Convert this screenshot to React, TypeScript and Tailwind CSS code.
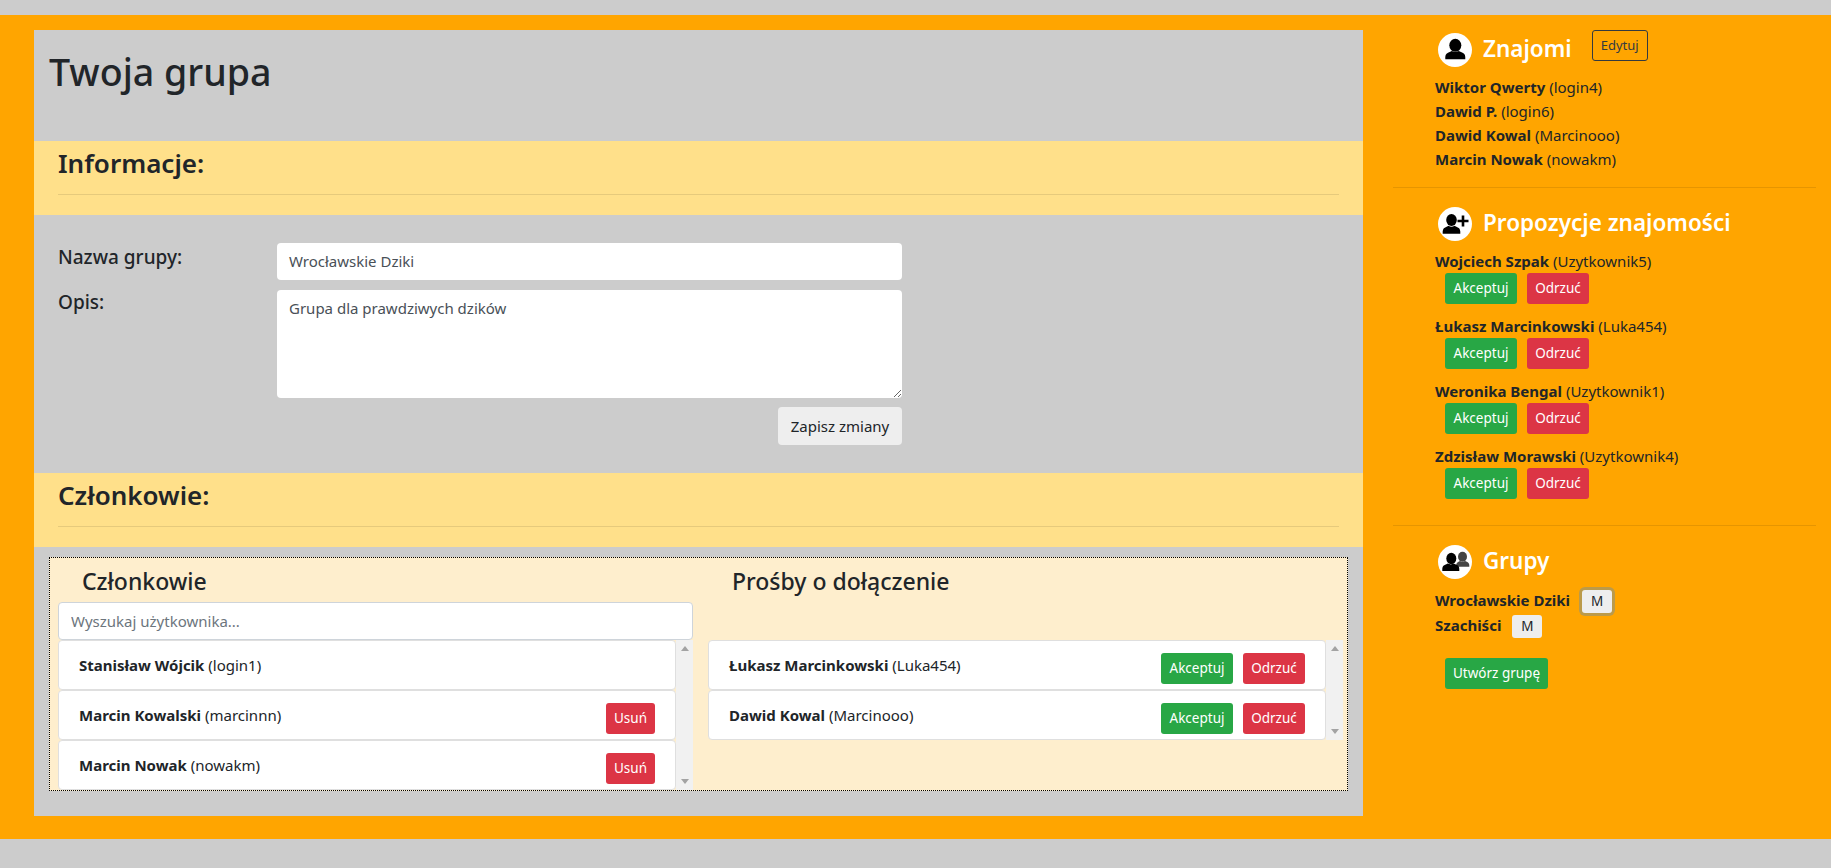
import React from 'react';

const font = "font-['Noto_Sans','Open_Sans',sans-serif]";

const PersonIcon = () => (
  <svg viewBox="0 0 34 34" className="w-[34px] h-[34px] shrink-0">
    <circle cx="17" cy="17" r="17" fill="#fff" />
    <ellipse cx="17.300" cy="12.300" rx="6" ry="6.500" fill="#000" />
    <path d="M7.300 26.300c-.2-3.500.3-5.600 2.700-6.600l3.800-1.700c2.100 1.300 4.900 1.300 7 0l3.800 1.700c2.400 1 2.900 3.100 2.700 6.600z" fill="#000" />
  </svg>
);

const PersonPlusIcon = () => (
  <svg viewBox="0 0 34 34" className="w-[34px] h-[34px] shrink-0">
    <circle cx="17" cy="17" r="17" fill="#fff" />
    <ellipse cx="13.500" cy="13" rx="5.300" ry="6" fill="#000" />
    <path d="M4.700 26.700c-.2-3.500.3-5.400 2.500-6.300l3.300-1.600c1.900 1.200 4.100 1.200 6 0l3.300 1.600c2.200.9 2.700 2.800 2.500 6.300z" fill="#000" />
    <path d="M23.700 8.500h2.600v4.200h4.200v2.600h-4.200v4.200h-2.600v-4.200h-4.200v-2.600h4.200z" fill="#000" />
  </svg>
);

const PeopleIcon = () => (
  <svg viewBox="0 0 34 34" className="w-[34px] h-[34px] shrink-0">
    <circle cx="17" cy="17" r="17" fill="#fff" />
    <ellipse cx="24.500" cy="11.800" rx="4.500" ry="5" fill="#444" />
    <path d="M18 21.700c0-3 .8-4.200 2.500-5l1.500-.7c1.600 1 3.400 1 5 0l1.800.8c1.900.8 2.700 2 2.500 4.900z" fill="#444" />
    <ellipse cx="13.300" cy="13.500" rx="5" ry="5.700" fill="#000" />
    <path d="M4.300 26c-.2-3.300.3-5 2.400-5.900l3.200-1.500c1.800 1.100 4 1.100 5.800 0l3.200 1.500c2.100.9 2.600 2.600 2.400 5.900z" fill="#000" />
  </svg>
);

const Btn = ({ label, color }: { label: string; color: 'green' | 'red' }) => (
  <button
    className={`h-[31px] px-2 rounded-[3px] text-[13.5px] text-white leading-none ${
      color === 'green' ? 'w-[72px] bg-[#28a745]' : 'min-w-[49px] bg-[#dc3545]'
    }`}
  >
    {label}
  </button>
);

const RejectBtn = () => (
  <button className="w-[62px] h-[31px] rounded-[3px] text-[13.5px] text-white leading-none bg-[#dc3545]">Odrzuć</button>
);

const Person = ({ name, login }: { name: string; login: string }) => (
  <div className="text-[15px] leading-6 text-[#212529] whitespace-nowrap">
    <b className="font-bold">{name}</b> ({login})
  </div>
);

const Scrollbar = () => (
  <div className="w-[17px] shrink-0 bg-[#f1f1f1] flex flex-col justify-between items-center py-[6px]">
    <div className="w-0 h-0 border-x-[4px] border-x-transparent border-b-[5px] border-b-[#a3a3a3]" />
    <div className="w-0 h-0 border-x-[4px] border-x-transparent border-t-[5px] border-t-[#a3a3a3]" />
  </div>
);

const ListItem = ({ name, login, children }: { name: string; login: string; children?: React.ReactNode }) => (
  <div className="h-[50px] shrink-0 bg-white border border-[#dfdfdf] rounded-[4px] px-[20px] flex justify-between">
    <div className="pt-[12px] text-[15px] leading-6 text-[#212529] whitespace-nowrap">
      <b className="font-bold">{name}</b> ({login})
    </div>
    <div className="pt-[12px] flex gap-[10px]">{children}</div>
  </div>
);

const suggestions = [
  ['Wojciech Szpak', 'Uzytkownik5'],
  ['Łukasz Marcinkowski', 'Luka454'],
  ['Weronika Bengal', 'Uzytkownik1'],
  ['Zdzisław Morawski', 'Uzytkownik4'],
];

const SectionBand = ({ title }: { title: string }) => (
  <div className="h-[74px] bg-[#ffe08a] px-[24px] pt-[4px]">
    <h3 className="text-[26px] leading-[34px] font-semibold text-[#212529] relative top-[1px]">{title}</h3>
    <div className="mt-[15px] border-t border-[#e6ca7c]" />
  </div>
);

export default function App() {
  return (
    <div className={`${font} min-h-[868px] bg-[#cccccc] pt-[15px]`}>
      <div className="h-[824px] bg-[#ffa500] flex">
        {/* Main panel */}
        <div className="w-[1329px] ml-[34px] mt-[15px] h-[786px] bg-[#cccccc] shrink-0">
          <div className="h-[111px] px-[15px] pt-[18px]">
            <h1 className="text-[37.600px] leading-[48px] font-medium text-[#212529]">Twoja grupa</h1>
          </div>

          <SectionBand title="Informacje:" />

          {/* Form */}
          <div className="h-[258px] pl-[24px] pt-[28px] w-[868px]">
            <div className="flex">
              <label className="w-[219px] text-[19px] leading-7 font-medium text-[#212529]">Nazwa grupy:</label>
              <div className="w-[625px] h-[37px] bg-white rounded-[4px] px-3 text-[15px] leading-[37px] text-[#495057]">
                Wrocławskie Dziki
              </div>
            </div>
            <div className="flex mt-[10px]">
              <label className="w-[219px] -mt-[2px] text-[19px] leading-7 font-medium text-[#212529]">Opis:</label>
              <textarea
                className="w-[625px] h-[108px] bg-white rounded-[4px] px-3 py-[6px] text-[15px] leading-6 text-[#495057]"
                defaultValue="Grupa dla prawdziwych dzików"
              />
            </div>
            <div className="flex justify-end mt-[9px]">
              <button className="w-[124px] h-[38px] bg-[#eeeeee] rounded-[4px] text-[15px] text-[#212529]">
                Zapisz zmiany
              </button>
            </div>
          </div>

          <SectionBand title="Członkowie:" />

          {/* Members box */}
          <div className="mt-[10px] mx-[15px] h-[234px] border border-dotted border-black bg-[#feeecd] pl-[8px] pr-[4px] flex gap-[15px] overflow-hidden">
            <div className="w-[635px] shrink-0">
              <h4 className="h-[44px] pl-[24px] pt-[7px] text-[23px] leading-8 font-medium text-[#212529]">Członkowie</h4>
              <input
                className="w-full h-[38px] bg-white border border-[#ced4da] rounded-[4px] px-3 text-[15px] placeholder:text-[#6c757d] block"
                placeholder="Wyszukaj użytkownika..."
              />
              <div className="flex h-[150px]">
                <div className="flex-1 overflow-hidden flex flex-col">
                  <ListItem name="Stanisław Wójcik" login="login1" />
                  <ListItem name="Marcin Kowalski" login="marcinnn">
                    <Btn label="Usuń" color="red" />
                  </ListItem>
                  <ListItem name="Marcin Nowak" login="nowakm">
                    <Btn label="Usuń" color="red" />
                  </ListItem>
                </div>
                <Scrollbar />
              </div>
            </div>
            <div className="flex-1">
              <h4 className="h-[82px] pl-[24px] pt-[7px] text-[23px] leading-8 font-medium text-[#212529]">Prośby o dołączenie</h4>
              <div className="flex h-[100px]">
                <div className="flex-1 flex flex-col">
                  <ListItem name="Łukasz Marcinkowski" login="Luka454">
                    <Btn label="Akceptuj" color="green" />
                    <RejectBtn />
                  </ListItem>
                  <ListItem name="Dawid Kowal" login="Marcinooo">
                    <Btn label="Akceptuj" color="green" />
                    <RejectBtn />
                  </ListItem>
                </div>
                <Scrollbar />
              </div>
            </div>
          </div>
        </div>

        {/* Sidebar */}
        <div className="ml-[30px] mr-[15px] flex-1 pt-[15px]">
          <div className="pl-[42px] h-[158px] border-b border-[#e69500]">
            <div className="flex items-center h-[40px] pl-[3px]">
              <PersonIcon />
              <h4 className="ml-[11px] pb-[3px] text-[22.500px] font-semibold text-white">Znajomi</h4>
              <button className="ml-[20px] -mt-[9px] w-[56px] h-[31px] border border-[#343a40] rounded-[3px] text-[13px] text-[#343a40]">
                Edytuj
              </button>
            </div>
            <div className="mt-[5px]">
              <Person name="Wiktor Qwerty" login="login4" />
              <Person name="Dawid P." login="login6" />
              <Person name="Dawid Kowal" login="Marcinooo" />
              <Person name="Marcin Nowak" login="nowakm" />
            </div>
          </div>

          <div className="pl-[42px] h-[338px] border-b border-[#e69500] pt-[19px]">
            <div className="flex items-center h-[34px] pl-[3px]">
              <PersonPlusIcon />
              <h4 className="ml-[11px] pb-[3px] text-[22.500px] font-semibold text-white">Propozycje znajomości</h4>
            </div>
            <div className="mt-[8px] flex flex-col gap-[10px]">
              {suggestions.map(([name, login]) => (
                <div key={login}>
                  <Person name={name} login={login} />
                  <div className="flex gap-[10px] ml-[10px]">
                    <Btn label="Akceptuj" color="green" />
                    <RejectBtn />
                  </div>
                </div>
              ))}
            </div>
          </div>

          <div className="pl-[42px] pt-[19px]">
            <div className="flex items-center h-[34px] pl-[3px]">
              <PeopleIcon />
              <h4 className="ml-[11px] pb-[3px] text-[22.500px] font-semibold text-white">Grupy</h4>
            </div>
            <div className="mt-[8px] flex items-center h-[29px]">
              <b className="text-[15px] leading-6 -mt-[4px] text-[#212529] font-bold">Wrocławskie Dziki</b>
              <button className="ml-[12px] w-[30px] h-[23px] bg-[#eeeeee] rounded-[3px] text-[13.5px] text-[#212529] ring-[3px] ring-[#bb9a4a]">
                M
              </button>
            </div>
            <div className="-mt-[1px] flex items-center h-[23px]">
              <b className="text-[15px] leading-6 -mt-[4px] text-[#212529] font-bold">Szachiści</b>
              <button className="ml-[11px] w-[30px] h-[23px] bg-[#eeeeee] rounded-[3px] text-[13.5px] text-[#212529]">
                M
              </button>
            </div>
            <button className="ml-[10px] mt-[20px] h-[31px] w-[103px] bg-[#28a745] rounded-[3px] text-[13.5px] text-white">
              Utwórz grupę
            </button>
          </div>
        </div>
      </div>
    </div>
  );
}
